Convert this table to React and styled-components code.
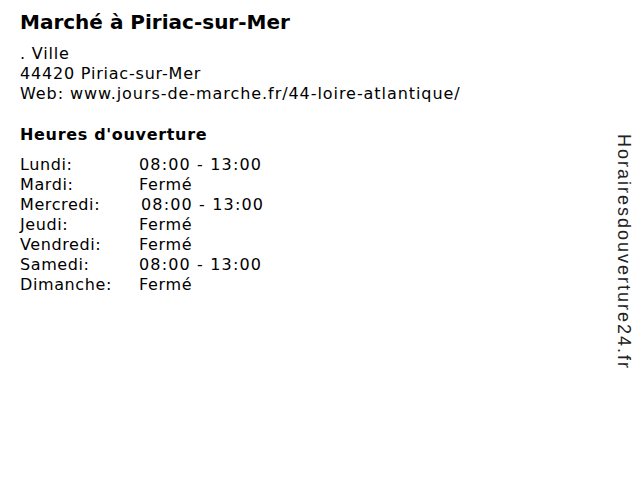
import React from "react";
import styled, { createGlobalStyle } from "styled-components";

const Global = createGlobalStyle`
  html, body { margin: 0; padding: 0; background: #fff; }
  body { font-family: "DejaVu Sans", Verdana, sans-serif; color: #000; }
`;

const Page = styled.div`
  display: flex;
  width: 640px;
  height: 480px;
  box-sizing: border-box;
`;

const Main = styled.main`
  flex: 1;
  padding: 8px 0 0 20px;
`;

const Title = styled.h1`
  margin: 0;
  font-size: 20px;
  font-weight: bold;
  line-height: 28px;
`;

const Address = styled.div`
  margin-top: 8px;
  font-size: 16px;
  line-height: 20px;
`;

const Line = styled.div`
  letter-spacing: ${(p) => p.$ls || 0}px;
  white-space: nowrap;
`;

const Heading = styled.h2`
  margin: 21px 0 0;
  font-size: 16px;
  font-weight: bold;
  line-height: 20px;
  letter-spacing: 0.67px;
`;

const Hours = styled.div`
  margin-top: 10px;
  display: grid;
  grid-template-columns: 119px auto;
  font-size: 16px;
  line-height: 20px;
`;

const Day = styled.span`
  letter-spacing: 0.6px;
`;

const Time = styled.span`
  padding-left: ${(p) => p.$shift || 0}px;
  letter-spacing: ${(p) => (p.$closed ? 0.7 : 1.15)}px;
`;

const Side = styled.aside`
  width: 40px;
  display: flex;
  justify-content: flex-start;
  padding-top: 134px;
  box-sizing: border-box;
`;

const Vertical = styled.span`
  writing-mode: vertical-rl;
  font-family: "Liberation Sans", Arial, sans-serif;
  font-size: 18px;
  letter-spacing: 2px;
  color: #222;
  line-height: 20px;
  margin-left: 14px;
`;

const rows = [
  ["Lundi:", "08:00 - 13:00", 0],
  ["Mardi:", "Fermé", 0],
  ["Mercredi:", "08:00 - 13:00", 2],
  ["Jeudi:", "Fermé", 0],
  ["Vendredi:", "Fermé", -1],
  ["Samedi:", "08:00 - 13:00", -1],
  ["Dimanche:", "Fermé", -1],
];

export default function App() {
  return (
    <>
      <Global />
      <Page>
        <Main>
          <Title>Marché à Piriac-sur-Mer</Title>
          <Address>
            <Line $ls={0.8}>. Ville</Line>
            <Line $ls={0.8}>44420 Piriac-sur-Mer</Line>
            <Line $ls={0.94}>Web: www.jours-de-marche.fr/44-loire-atlantique/</Line>
          </Address>
          <Heading>Heures d'ouverture</Heading>
          <Hours>
            {rows.map(([d, t, s]) => (
              <React.Fragment key={d}>
                <Day>{d}</Day>
                <Time $shift={s} $closed={t === "Fermé"}>
                  {t}
                </Time>
              </React.Fragment>
            ))}
          </Hours>
        </Main>
        <Side>
          <Vertical>Horairesdouverture24.fr</Vertical>
        </Side>
      </Page>
    </>
  );
}
